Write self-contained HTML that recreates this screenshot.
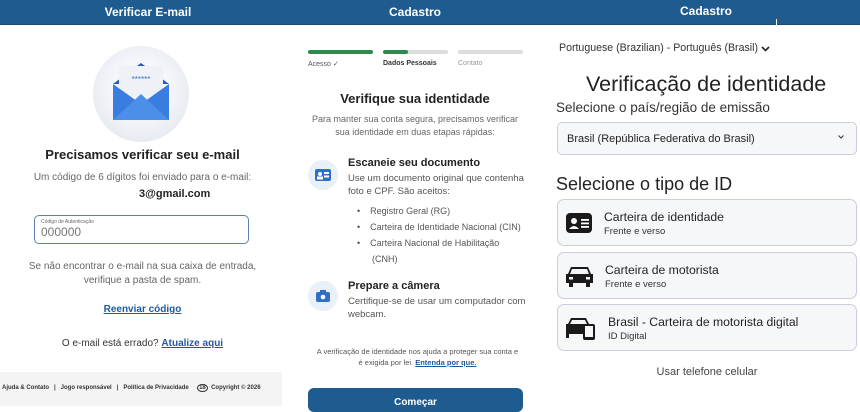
<!DOCTYPE html>
<html><head><meta charset="utf-8"><style>
*{margin:0;padding:0;box-sizing:border-box}
body{width:860px;height:406px;overflow:hidden;background:#fff;font-family:"Liberation Sans","DejaVu Sans",sans-serif;position:relative;color:#222}
.a{position:absolute}
.hdr{position:absolute;top:0;left:0;width:860px;height:25px;background:#1e5b8e;border-bottom:1px solid #174a75}
.ht{position:absolute;top:5px;color:#fff;font-weight:bold;font-size:12px;text-align:center}
.c{text-align:center}
.g{color:#666}
.card{position:absolute;left:557px;width:300px;border:1px solid #ccd;border-radius:7px;background:#f6f7f9}
.card .t{position:absolute;top:10px;font-size:12.2px;color:#222}
.card .s{position:absolute;top:26px;font-size:9.5px;color:#333}
</style></head><body>
<div class="hdr"></div>
<div class="ht" style="left:0;width:296px">Verificar E-mail</div>
<div class="ht" style="left:290px;width:250px">Cadastro</div>
<div class="ht" style="left:560px;width:292px;top:4px">Cadastro</div>
<div class="a" style="left:776px;top:19px;width:1px;height:6px;background:#fff"></div>

<!-- LEFT -->
<div class="a" style="left:93px;top:46px;width:96px;height:96px;border-radius:50%;background:radial-gradient(circle at 50% 45%,#f4f6fa 40%,#dde2ea 100%)"></div>
<svg class="a" style="left:110px;top:58px" width="62" height="64" viewBox="0 0 62 64">
<path d="M3 26 L31 5 L59 26 Z" fill="#2a5bb0"/>
<rect x="9" y="8" width="44" height="30" rx="2" fill="#eef1f5"/>
<text x="31" y="24" font-size="8" fill="#3a6fd0" text-anchor="middle" font-family="Liberation Sans">******</text>
<path d="M3 26 L3 62 L59 62 L59 26 L31 46 Z" fill="#3a7de0"/>
<path d="M3 62 L31 36 L59 62 Z" fill="#4b8fe8"/>
</svg>
<div class="a c" style="left:0;width:285px;top:147px;font-size:13px;font-weight:bold;color:#222">Precisamos verificar seu e-mail</div>
<div class="a c g" style="left:0;width:285px;top:172px;font-size:10px">Um código de 6 dígitos foi enviado para o e-mail:</div>
<div class="a" style="left:139px;top:188px;font-size:11px;font-weight:bold;color:#222">3@gmail.com</div>
<div class="a" style="left:34px;top:215px;width:215px;height:29px;border:1px solid #5a7fb0;border-radius:5px"></div>
<div class="a" style="left:41px;top:219px;font-size:5px;color:#666">Código de Autenticação</div>
<div class="a" style="left:41px;top:225px;font-size:12px;color:#777">000000</div>
<div class="a c g" style="left:0;width:285px;top:260px;font-size:10px;line-height:14px">Se não encontrar o e-mail na sua caixa de entrada,<br>verifique a pasta de spam.</div>
<div class="a c" style="left:0;width:285px;top:304px;font-size:10px;font-weight:bold;color:#1e5b9e;text-decoration:underline">Reenviar código</div>
<div class="a c" style="left:0;width:285px;top:338px;font-size:10px;color:#333">O e-mail está errado? <b style="color:#1e5b9e;text-decoration:underline">Atualize aqui</b></div>
<div class="a" style="left:0;top:372px;width:282px;height:34px;background:#f4f4f4"></div>
<div class="a" style="left:2px;top:385px;font-size:6px;font-weight:bold;color:#333;white-space:nowrap">Ajuda &amp; Contato &nbsp; | &nbsp; Jogo responsável &nbsp; | &nbsp; Política de Privacidade &nbsp; &nbsp; <span style="border:1px solid #333;border-radius:50%;padding:0 1px">18</span> &nbsp;Copyright © 2026</div>

<!-- MIDDLE -->
<div class="a" style="left:308px;top:50px;width:65px;height:4px;border-radius:2px;background:#2e8b4e"></div>
<div class="a" style="left:383px;top:50px;width:65px;height:4px;border-radius:2px;background:#ddd"></div>
<div class="a" style="left:383px;top:50px;width:25px;height:4px;border-radius:2px;background:#2e8b4e"></div>
<div class="a" style="left:458px;top:50px;width:65px;height:4px;border-radius:2px;background:#ddd"></div>
<div class="a" style="left:308px;top:60px;font-size:7px;color:#555">Acesso ✓</div>
<div class="a" style="left:383px;top:60px;font-size:7px;font-weight:bold;color:#333">Dados Pessoais</div>
<div class="a" style="left:458px;top:60px;font-size:7px;color:#999">Contato</div>
<div class="a c" style="left:290px;width:250px;top:91px;font-size:13px;font-weight:bold;color:#222">Verifique sua identidade</div>
<div class="a c g" style="left:290px;width:250px;top:113px;font-size:9px;line-height:13px">Para manter sua conta segura, precisamos verificar<br>sua identidade em duas etapas rápidas:</div>
<div class="a" style="left:308px;top:160px;width:30px;height:30px;border-radius:50%;background:#e8f0fa"></div>
<svg class="a" style="left:315px;top:169px" width="16" height="12"><rect width="16" height="12" rx="2" fill="#2f6fc8"/><circle cx="5" cy="5" r="2" fill="#fff"/><rect x="2" y="7.5" width="6" height="3" fill="#fff"/><rect x="9" y="3" width="5" height="2" fill="#fff"/><rect x="9" y="6.5" width="5" height="2" fill="#fff"/></svg>
<div class="a" style="left:348px;top:157px;font-size:11px;font-weight:bold;color:#222">Escaneie seu documento</div>
<div class="a g" style="left:348px;top:172px;font-size:9.5px;line-height:13px;color:#555">Use um documento original que contenha<br>foto e CPF. São aceitos:</div>
<div class="a" style="left:357px;top:203px;font-size:9px;line-height:16px;color:#555">•&nbsp;&nbsp;&nbsp;&nbsp;Registro Geral (RG)<br>•&nbsp;&nbsp;&nbsp;&nbsp;Carteira de Identidade Nacional (CIN)<br>•&nbsp;&nbsp;&nbsp;&nbsp;Carteira Nacional de Habilitação<br>&nbsp;&nbsp;&nbsp;&nbsp;&nbsp;&nbsp;(CNH)</div>
<div class="a" style="left:308px;top:281px;width:30px;height:30px;border-radius:50%;background:#e8f0fa"></div>
<svg class="a" style="left:316px;top:290px" width="14" height="12"><rect y="2" width="14" height="10" rx="2" fill="#2f6fc8"/><rect x="4" y="0" width="6" height="3" fill="#2f6fc8"/><circle cx="7" cy="7" r="2.3" fill="#fff"/></svg>
<div class="a" style="left:348px;top:280px;font-size:11px;font-weight:bold;color:#222">Prepare a câmera</div>
<div class="a" style="left:348px;top:295px;font-size:9.5px;line-height:13px;color:#555">Certifique-se de usar um computador com<br>webcam.</div>
<div class="a c" style="left:300px;width:235px;top:346px;font-size:7.5px;line-height:11px;color:#555">A verificação de identidade nos ajuda a proteger sua conta e<br>é exigida por lei. <b style="color:#1e5b9e;text-decoration:underline">Entenda por que.</b></div>
<div class="a c" style="left:308px;top:388px;width:215px;height:24px;border-radius:6px;background:#1e5b8e;color:#fff;font-size:10px;font-weight:bold;padding-top:9px">Começar</div>

<!-- RIGHT -->
<div class="a" style="left:559px;top:42px;font-size:10.6px;color:#333">Portuguese (Brazilian) - Português (Brasil)</div>
<svg class="a" style="left:761px;top:46px" width="9" height="6"><path d="M1 1 L4.5 4.5 L8 1" stroke="#222" stroke-width="1.6" fill="none"/></svg>
<div class="a" style="left:586px;top:72px;font-size:21.5px;color:#222">Verificação de identidade</div>
<div class="a" style="left:556px;top:100px;font-size:13.5px;color:#333">Selecione o país/região de emissão</div>
<div class="a" style="left:557px;top:122px;width:300px;height:33px;border:1px solid #ccd;border-radius:5px;background:#f6f7f9"></div>
<div class="a" style="left:567px;top:133px;font-size:11px;color:#222">Brasil (República Federativa do Brasil)</div>
<svg class="a" style="left:838px;top:135px" width="6" height="4"><path d="M0.5 0.5 L3 3 L5.5 0.5" stroke="#333" fill="none"/></svg>
<div class="a" style="left:556px;top:174px;font-size:18px;color:#222">Selecione o tipo de ID</div>
<div class="card" style="top:199px;height:47px"><div class="t" style="left:46px">Carteira de identidade</div><div class="s" style="left:46px">Frente e verso</div></div>
<svg class="a" style="left:566px;top:213px" width="26" height="20"><rect width="26" height="20" rx="4" fill="#1a1a1a"/><circle cx="8" cy="8" r="3" fill="#fff"/><path d="M3 16 Q8 10 13 16Z" fill="#fff"/><rect x="15" y="6" width="8" height="1.8" fill="#fff"/><rect x="15" y="9.5" width="8" height="1.8" fill="#fff"/><rect x="15" y="13" width="8" height="1.8" fill="#fff"/></svg>
<div class="card" style="top:252px;height:47px"><div class="t" style="left:47px">Carteira de motorista</div><div class="s" style="left:47px">Frente e verso</div></div>
<svg class="a" style="left:566px;top:265px" width="27" height="22"><path d="M5 2 H22 L25 9 H27 V18 H24 V22 H20 V18 H7 V22 H3 V18 H0 V9 H2 Z" fill="#1a1a1a"/><path d="M6 4 H21 L23 9 H4 Z" fill="#f6f7f9"/><rect x="3" y="12" width="4" height="2.5" fill="#f6f7f9"/><rect x="20" y="12" width="4" height="2.5" fill="#f6f7f9"/></svg>
<div class="card" style="top:304px;height:47px"><div class="t" style="left:50px">Brasil - Carteira de motorista digital</div><div class="s" style="left:50px">ID Digital</div></div>
<svg class="a" style="left:566px;top:316px" width="30" height="24"><path d="M5 2 H20 L23 8 H25 V18 H3 V22 H0 V8 H2 Z" fill="#1a1a1a"/><path d="M6 4 H19 L21 8 H4 Z" fill="#f6f7f9"/><rect x="17" y="8" width="12" height="16" rx="2" fill="#1a1a1a"/><rect x="19" y="10" width="8" height="11" fill="#f6f7f9"/></svg>
<div class="a c" style="left:557px;width:300px;top:366px;font-size:11px;color:#444">Usar telefone celular</div>
</body></html>
